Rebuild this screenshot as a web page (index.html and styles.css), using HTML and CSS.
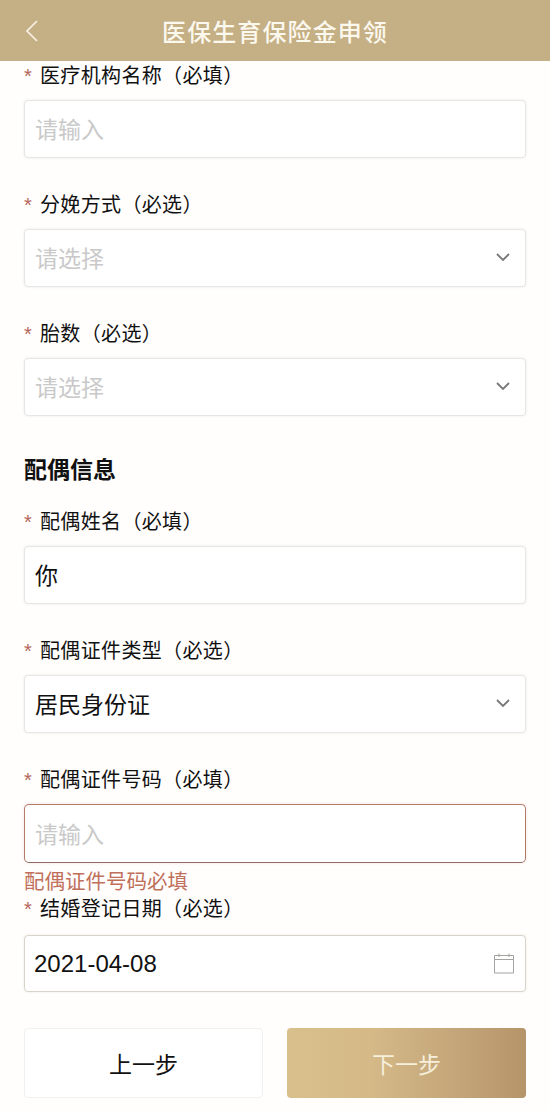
FILE: index.html
```html
<!DOCTYPE html>
<html lang="zh-CN">
<head>
    <meta charset="UTF-8">
    <meta name="viewport" content="width=device-width, initial-scale=1.0">
    <title>医保生育保险金申领</title>
    <link rel="stylesheet" href="styles.css">
</head>
<body>
    <!-- Header -->
    <div class="navbar">
        <svg class="back-icon" width="16" height="24" viewBox="0 0 16 24"><path d="M13 2 L3 12 L13 22" fill="none" stroke="#f6f1e4" stroke-width="1.7"/></svg>
        <h1>医保生育保险金申领</h1>
    </div>

    <!-- Form -->
    <div class="form">
        <div class="field">
            <div class="label"><span class="star">*</span>医疗机构名称（必填）</div>
            <div class="control placeholder">请输入</div>
        </div>
        <div class="field">
            <div class="label"><span class="star">*</span>分娩方式（必选）</div>
            <div class="control placeholder select">请选择
                <svg class="chevron" width="14" height="8" viewBox="0 0 14 8"><path d="M1 1 L7 7 L13 1" fill="none" stroke="#777" stroke-width="1.8"/></svg>
            </div>
        </div>
        <div class="field">
            <div class="label"><span class="star">*</span>胎数（必选）</div>
            <div class="control placeholder select">请选择
                <svg class="chevron" width="14" height="8" viewBox="0 0 14 8"><path d="M1 1 L7 7 L13 1" fill="none" stroke="#777" stroke-width="1.8"/></svg>
            </div>
        </div>

        <h2>配偶信息</h2>

        <div class="field">
            <div class="label"><span class="star">*</span>配偶姓名（必填）</div>
            <div class="control">你</div>
        </div>
        <div class="field">
            <div class="label"><span class="star">*</span>配偶证件类型（必选）</div>
            <div class="control select">居民身份证
                <svg class="chevron" width="14" height="8" viewBox="0 0 14 8"><path d="M1 1 L7 7 L13 1" fill="none" stroke="#777" stroke-width="1.8"/></svg>
            </div>
        </div>
        <div class="field field-error">
            <div class="label"><span class="star">*</span>配偶证件号码（必填）</div>
            <div class="control placeholder">请输入</div>
            <div class="error-text">配偶证件号码必填</div>
        </div>
        <div class="field field-date">
            <div class="label"><span class="star">*</span>结婚登记日期（必选）</div>
            <div class="control select">2021-04-08
                <svg class="calendar" width="20" height="21" viewBox="0 0 20 21"><path d="M0.5 2.5 H19.5 V20 H0.5 Z M0.5 6.5 H19.5 M5 0.5 V4 M15 0.5 V4" fill="none" stroke="#a3a3a0" stroke-width="1"/></svg>
            </div>
        </div>

        <div class="buttons">
            <button class="btn-prev">上一步</button>
            <button class="btn-next">下一步</button>
        </div>
    </div>
</body>
</html>
```

FILE: styles.css
```css
body {
    margin: 0;
    font-family: "Liberation Sans", "Noto Sans CJK SC", sans-serif;
    background-color: #fffefd;
    color: #111;
}
.navbar {
    height: 61px;
    background-color: #c5af84;
    display: flex;
    justify-content: center;
    align-items: center;
    position: relative;
}
.navbar h1 {
    margin: 0;
    font-size: 24px;
    font-weight: 500;
    letter-spacing: 1.1px;
    color: #fbf8ee;
}
.back-icon {
    position: absolute;
    left: 24px;
    top: 19px;
}
.form {
    padding: 0 24px;
}
.field {
    margin-bottom: 32px;
}
.label {
    height: 29px;
    line-height: 31px;
    font-size: 20px;
    letter-spacing: 0.35px;
    margin-bottom: 10px;
    display: flex;
}
.star {
    width: 16px;
    color: #b5675a;
    font-size: 20px;
}
.control {
    box-sizing: border-box;
    height: 58px;
    padding: 0 10px 2px 10px;
    border: 1px solid #e6e6e4;
    border-radius: 4px;
    background-color: #fff;
    box-shadow: 0 0 3px rgba(0, 0, 0, 0.08);
    display: flex;
    align-items: center;
    font-size: 23px;
}
.select {
    justify-content: space-between;
}
.placeholder {
    color: #c9c9c9;
}
.chevron {
    margin-right: 5px;
}
.calendar {
    margin-right: 1px;
}
h2 {
    margin: 39px 0 22px;
    height: 30px;
    line-height: 30px;
    font-size: 23px;
    font-weight: 700;
}
.field-error {
    margin-bottom: 0;
}
.field-error .control {
    height: 59px;
    border: 1.5px solid #b5796a;
    border-bottom-color: #8f6d62;
    border-radius: 5px;
    box-shadow: 0 0 3px rgba(176, 112, 95, 0.2);
}
.error-text {
    margin-top: 6px;
    height: 25px;
    line-height: 25px;
    font-size: 20.5px;
    color: #c0705a;
}
.field-date {
    margin-bottom: 36px;
}
.field-date .label {
    margin-bottom: 12px;
}
.field-date .control {
    height: 57px;
    padding: 0 10px 0 9px;
    border-color: #d8d5c8;
    font-size: 24px;
}
.buttons {
    display: flex;
    justify-content: space-between;
}
.buttons button {
    width: 239px;
    height: 70px;
    font-family: inherit;
    font-size: 23px;
    border-radius: 4px;
}
.btn-prev {
    background-color: #fff;
    color: #111;
    border: 1px solid #f0f0ee;
}
.btn-next {
    background: linear-gradient(90deg, #d8c08c, #d5b987 35%, #c4a67a 70%, #b69469);
    color: #f6efdc;
    border: none;
}
```
